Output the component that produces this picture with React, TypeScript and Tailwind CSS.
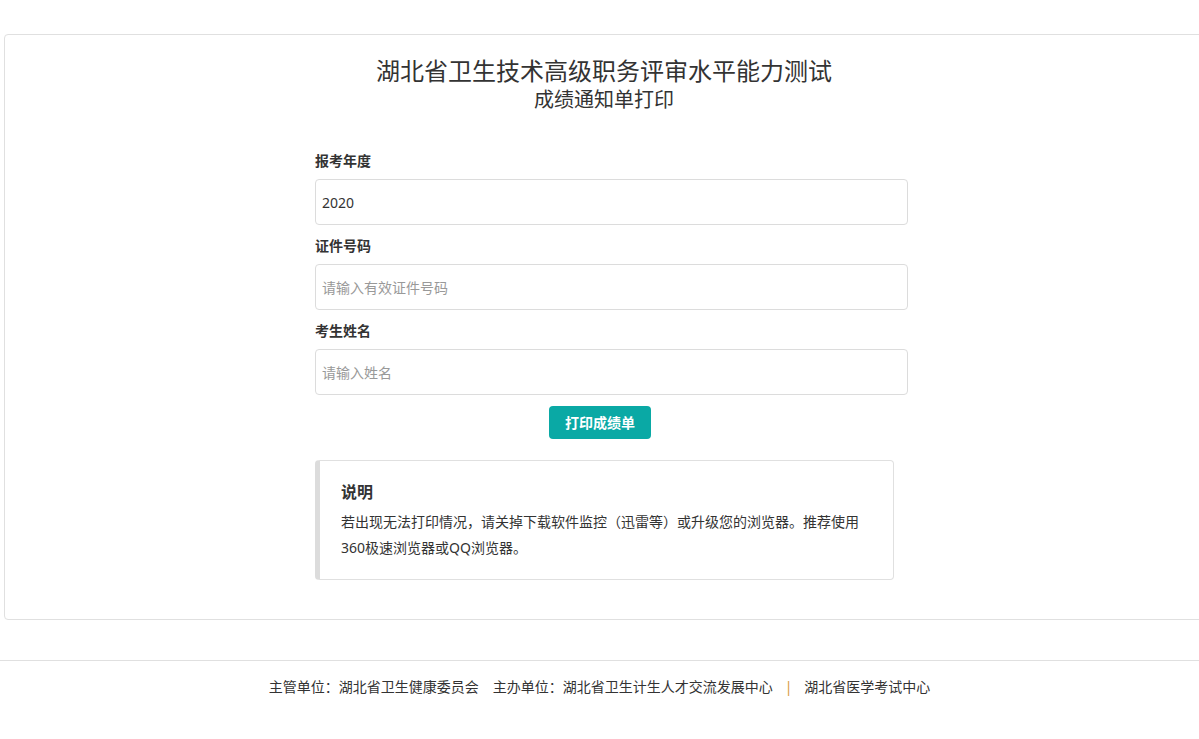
import React from 'react';

const font = { fontFamily: '"Noto Sans", "Noto Sans CJK SC", sans-serif' };

const Field: React.FC<{ label: string; value?: string; placeholder?: string }> = ({ label, value, placeholder }) => (
  <div className="mt-[11px] first:mt-0">
    <label className="block text-[14px] leading-[20px] font-bold text-[#333] mb-[8px]">{label}</label>
    <input
      className="block w-full h-[46px] px-[6px] text-[14px] text-[#333] placeholder:text-[#999] border border-[#dcdcdc] rounded-[4px] outline-none bg-white"
      defaultValue={value}
      placeholder={placeholder}
    />
  </div>
);

const App: React.FC = () => {
  return (
    <div className="min-h-screen bg-white overflow-x-hidden pt-[34px] text-[#333]" style={font}>
      {/* main panel */}
      <div className="ml-[4px] w-[1200px] h-[586px] border border-[#e0e0e0] rounded-[4px] bg-white">
        <div className="pt-[20px] text-center">
          <h1 className="text-[24px] leading-[32px] text-[#333]">湖北省卫生技术高级职务评审水平能力测试</h1>
          <h2 className="text-[20px] leading-[26px] text-[#333]">成绩通知单打印</h2>
        </div>

        <div className="ml-[310px] w-[593px] mt-[38px]">
          <Field label="报考年度" value="2020" />
          <Field label="证件号码" placeholder="请输入有效证件号码" />
          <Field label="考生姓名" placeholder="请输入姓名" />

          <div className="mt-[11px] pl-[234px]">
            <button className="w-[102px] h-[33px] rounded-[4px] bg-[#0aa9a5] text-white text-[14px] font-bold">
              打印成绩单
            </button>
          </div>

          <div className="mt-[21px] w-[579px] h-[120px] border border-[#e0e0e0] border-l-[5px] border-l-[#dcdcdc] rounded-[4px] pl-[21px] pr-[25px] pt-[19px]">
            <h3 className="text-[16px] leading-[24px] font-bold text-[#333]">说明</h3>
            <p className="mt-[5px] text-[14px] leading-[26px] text-[#333]">
              若出现无法打印情况，请关掉下载软件监控（迅雷等）或升级您的浏览器。推荐使用360极速浏览器或QQ浏览器。
            </p>
          </div>
        </div>
      </div>

      {/* footer */}
      <footer className="mt-[40px] border-t border-[#e0e0e0] pt-[15px] pb-[30px] text-center text-[14px] leading-[22px] text-[#333]">
        <span>主管单位：湖北省卫生健康委员会</span>
        <span className="ml-[14px]">主办单位：湖北省卫生计生人才交流发展中心</span>
        <span className="mx-[12px] text-[#d89a3a]">|</span>
        <span>湖北省医学考试中心</span>
      </footer>
    </div>
  );
};

export default App;
